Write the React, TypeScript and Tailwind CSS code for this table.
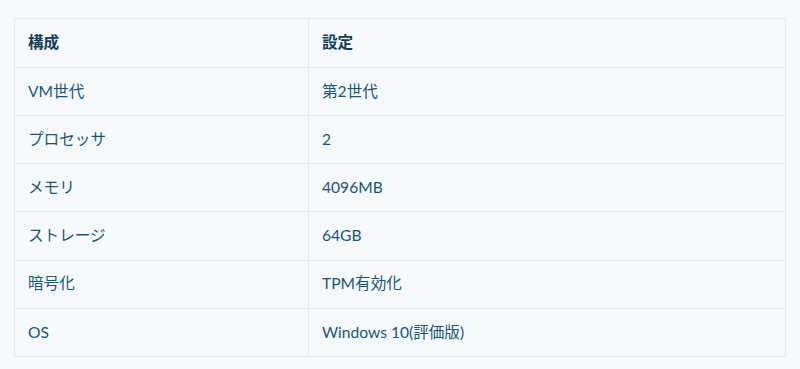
const ROWS: [string, string][] = [
  ['VM世代', '第2世代'],
  ['プロセッサ', '2'],
  ['メモリ', '4096MB'],
  ['ストレージ', '64GB'],
  ['暗号化', 'TPM有効化'],
  ['OS', 'Windows 10(評価版)'],
];

export default function App() {
  return (
    <div
      className="min-h-[369px] w-[800px] bg-[#f6f9fc] px-[14px] pt-[18px]"
      style={{ fontFamily: 'Lato, "Noto Sans CJK JP", sans-serif' }}
    >
      <table className="w-[772px] table-fixed border-collapse text-[15.6px] text-[#1b5577]">
        <colgroup>
          <col className="w-[294px]" />
          <col />
        </colgroup>
        <thead>
          <tr className="h-[49px]">
            <th className="border border-[#e2e8ee] px-[13px] text-left font-bold text-[#123e5a]">構成</th>
            <th className="border border-[#e2e8ee] px-[13px] text-left font-bold text-[#123e5a]">設定</th>
          </tr>
        </thead>
        <tbody>
          {ROWS.map(([k, v]) => (
            <tr key={k} className="h-[48.15px]">
              <td className="border border-[#e2e8ee] px-[13px]">{k}</td>
              <td className="border border-[#e2e8ee] px-[13px]">{v}</td>
            </tr>
          ))}
        </tbody>
      </table>
    </div>
  );
}
